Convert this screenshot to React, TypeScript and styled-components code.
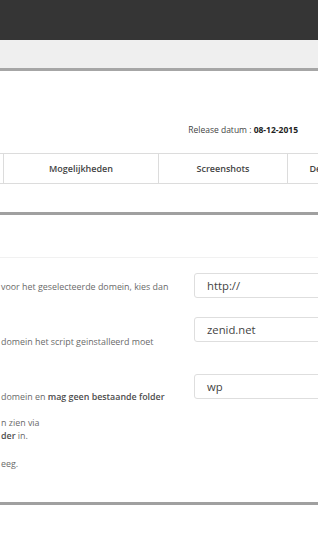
import React from 'react'
import styled, { createGlobalStyle } from 'styled-components'

const Global = createGlobalStyle`
  html, body {
    margin: 0;
    padding: 0;
    background: #fff;
    overflow: hidden;
  }
  body {
    font-family: "Open Sans", "Liberation Sans", sans-serif;
    color: #555;
  }
`

const tabs = [
  { label: '', width: 3 },
  { label: 'Mogelijkheden', width: 154 },
  { label: 'Screenshots', width: 128 },
  { label: 'Details', width: 73 },
]

export default function App() {
  return (
    <Page>
      <Global />
      <TopBar />
      <SubBar />

      <Release>
        Release datum : <b>08-12-2015</b>
      </Release>

      <TabStrip>
        {tabs.map((t, i) => (
          <Tab key={i} $width={t.width}>{t.label}</Tab>
        ))}
      </TabStrip>

      <Divide $top={28} />

      <SectionHead />

      <Form>
        <Hints>
          <Hint $top={22}>voor het geselecteerde domein, kies dan</Hint>
          <Hint $top={42}>domein het script geinstalleerd moet</Hint>
          <Hint $top={42}>
            domein en <b>mag geen bestaande folder</b>
          </Hint>
          <Hint $top={13}>
            n zien via
            <br />
            <b>der</b> in.
          </Hint>
          <Hint $top={15}>eeg.</Hint>
        </Hints>

        <Fields>
          <Field $top={15}>http://</Field>
          <Field $top={19}>zenid.net</Field>
          <Field $top={32}>wp</Field>
        </Fields>
      </Form>

      <Divide $top={0} />
    </Page>
  )
}

const Page = styled.div`
  width: 318px;
  min-height: 535px;
  overflow: hidden;
`

const TopBar = styled.div`
  height: 40px;
  background: #353535;
`

const SubBar = styled.div`
  height: 28px;
  background: #efefef;
  border-bottom: 3px solid #a6a6a6;
`

const Release = styled.div`
  margin-top: 52px;
  padding-right: 20px;
  text-align: right;
  font-size: 8.5px;
  line-height: 14px;
  color: #444;

  b {
    font-weight: 700;
    color: #222;
  }
`

const TabStrip = styled.div`
  display: flex;
  margin-top: 16px;
  height: 29px;
  border-top: 1px solid #dcdcdc;
  border-bottom: 1px solid #dcdcdc;
  white-space: nowrap;
`

const Tab = styled.div<{ $width: number }>`
  flex: 0 0 ${p => p.$width}px;
  display: flex;
  align-items: center;
  justify-content: center;
  border-right: 1px solid #dcdcdc;
  font-size: 9px;
  font-weight: 600;
  color: #444;
`

const Divide = styled.div<{ $top: number }>`
  margin-top: ${p => p.$top}px;
  height: 3px;
  background: #a0a0a0;
`

const SectionHead = styled.div`
  height: 42px;
  border-bottom: 1px solid #f1f1f1;
`

const Form = styled.div`
  display: grid;
  grid-template-columns: 194px 1fr;
  height: 244px;
`

const Hints = styled.div`
  display: flex;
  flex-direction: column;
  padding-left: 1px;
`

const Hint = styled.p<{ $top: number }>`
  margin: ${p => p.$top}px 0 0;
  font-size: 8.9px;
  line-height: 13px;
  color: #6a6a6a;
  white-space: nowrap;

  b {
    font-weight: 600;
    color: #4d4d4d;
  }
`

const Fields = styled.div`
  display: flex;
  flex-direction: column;
`

const Field = styled.div<{ $top: number }>`
  margin-top: ${p => p.$top}px;
  width: 160px;
  height: 23px;
  border: 1px solid #dedede;
  border-radius: 3px;
  padding-left: 12px;
  display: flex;
  align-items: center;
  font-size: 11.3px;
  color: #444;
`
